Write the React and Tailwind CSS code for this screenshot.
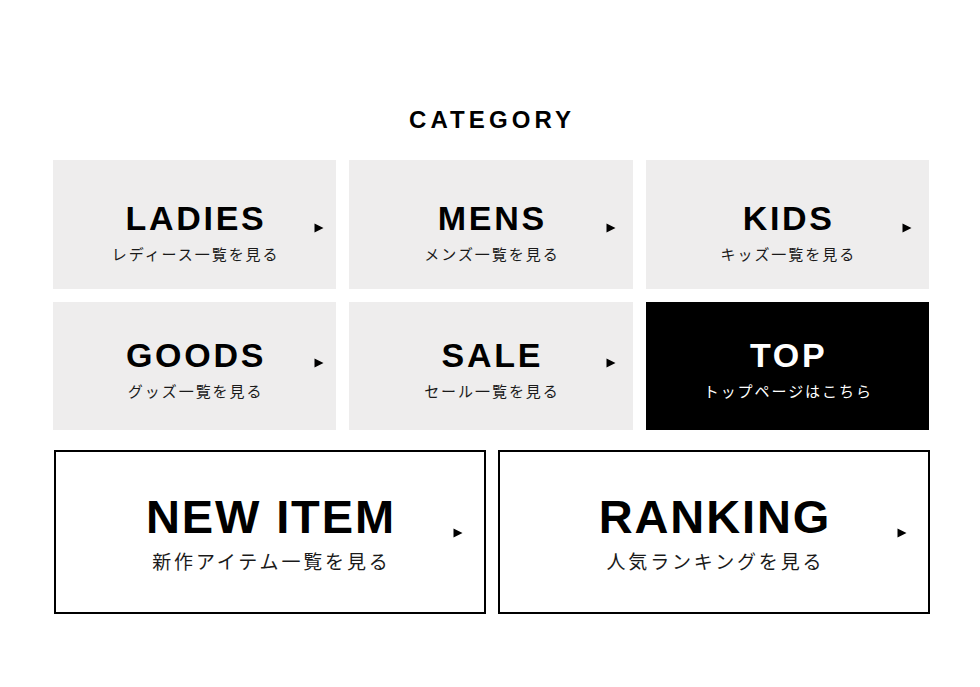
import React from "react";

const latin = { fontFamily: '"Liberation Sans", Arial, sans-serif' };
const jp = { fontFamily: '"Noto Sans CJK JP", "Noto Sans", sans-serif' };

const categories = [
  { title: "LADIES", sub: "レディース一覧を見る", row: 1, arrow: "right-[12px]" },
  { title: "MENS", sub: "メンズ一覧を見る", row: 1, arrow: "right-[17px]" },
  { title: "KIDS", sub: "キッズ一覧を見る", row: 1, arrow: "right-[17px]" },
  { title: "GOODS", sub: "グッズ一覧を見る", row: 2, arrow: "right-[12px]" },
  { title: "SALE", sub: "セール一覧を見る", row: 2, arrow: "right-[17px]" },
  { title: "TOP", sub: "トップページはこちら", row: 2, dark: true },
];

const features = [
  { title: "NEW ITEM", sub: "新作アイテム一覧を見る" },
  { title: "RANKING", sub: "人気ランキングを見る" },
];

function Arrow({ className }) {
  return (
    <svg
      className={className}
      width="10"
      height="10"
      viewBox="0 0 10 10"
      aria-hidden="true"
    >
      <polygon points="0.5,0.5 9.5,5 0.5,9.5" fill="#000" />
    </svg>
  );
}

function CategoryCard({ item }) {
  const { title, sub, row, arrow, dark } = item;

  return (
    <a
      href="#"
      className={`relative flex flex-col items-center ${
        row === 1 ? "h-[129px] pt-[39px]" : "h-[128px] pt-[34px]"
      } ${dark ? "bg-black text-white" : "bg-[#eeeded] text-black"}`}
    >
      <span
        className="text-[34px] leading-[38px] font-bold tracking-[0.08em] pl-[0.08em]"
        style={latin}
      >
        {title}
      </span>
      <span
        className={`mt-[6px] text-[15px] leading-[21px] font-normal tracking-[0.13em] pl-[0.13em] ${
          dark ? "text-white" : "text-[#1a1a1a]"
        }`}
        style={jp}
      >
        {sub}
      </span>
      {!dark && (
        <Arrow
          className={`absolute ${arrow} ${
            row === 1 ? "top-[63px]" : "top-[56px]"
          }`}
        />
      )}
    </a>
  );
}

function FeatureCard({ item }) {
  return (
    <a
      href="#"
      className="relative flex h-[164px] flex-col items-center justify-center border-2 border-black bg-white text-black"
    >
      <span
        className="text-[47px] leading-[52px] font-bold tracking-[0.04em] pl-[0.04em]"
        style={latin}
      >
        {item.title}
      </span>
      <span
        className="mt-[5px] text-[19px] leading-[26px] font-normal tracking-[0.15em] pl-[0.15em] text-[#1a1a1a]"
        style={jp}
      >
        {item.sub}
      </span>
      <Arrow className="absolute right-[21px] top-[76px]" />
    </a>
  );
}

export default function App() {
  return (
    <div className="min-h-screen w-full bg-white pt-[106px]">
      {/* Section heading */}
      <h2
        className="text-center text-[24px] leading-[28px] font-bold tracking-[0.17em] pl-[0.17em] text-black"
        style={latin}
      >
        CATEGORY
      </h2>

      {/* Category grid */}
      <div className="ml-[53px] mt-[26px] grid w-[876px] grid-cols-3 gap-[13px]">
        {categories.map((item) => (
          <CategoryCard key={item.title} item={item} />
        ))}
      </div>

      {/* Feature links */}
      <div className="ml-[54px] mt-[20px] grid w-[876px] grid-cols-2 gap-[12px]">
        {features.map((item) => (
          <FeatureCard key={item.title} item={item} />
        ))}
      </div>
    </div>
  );
}
